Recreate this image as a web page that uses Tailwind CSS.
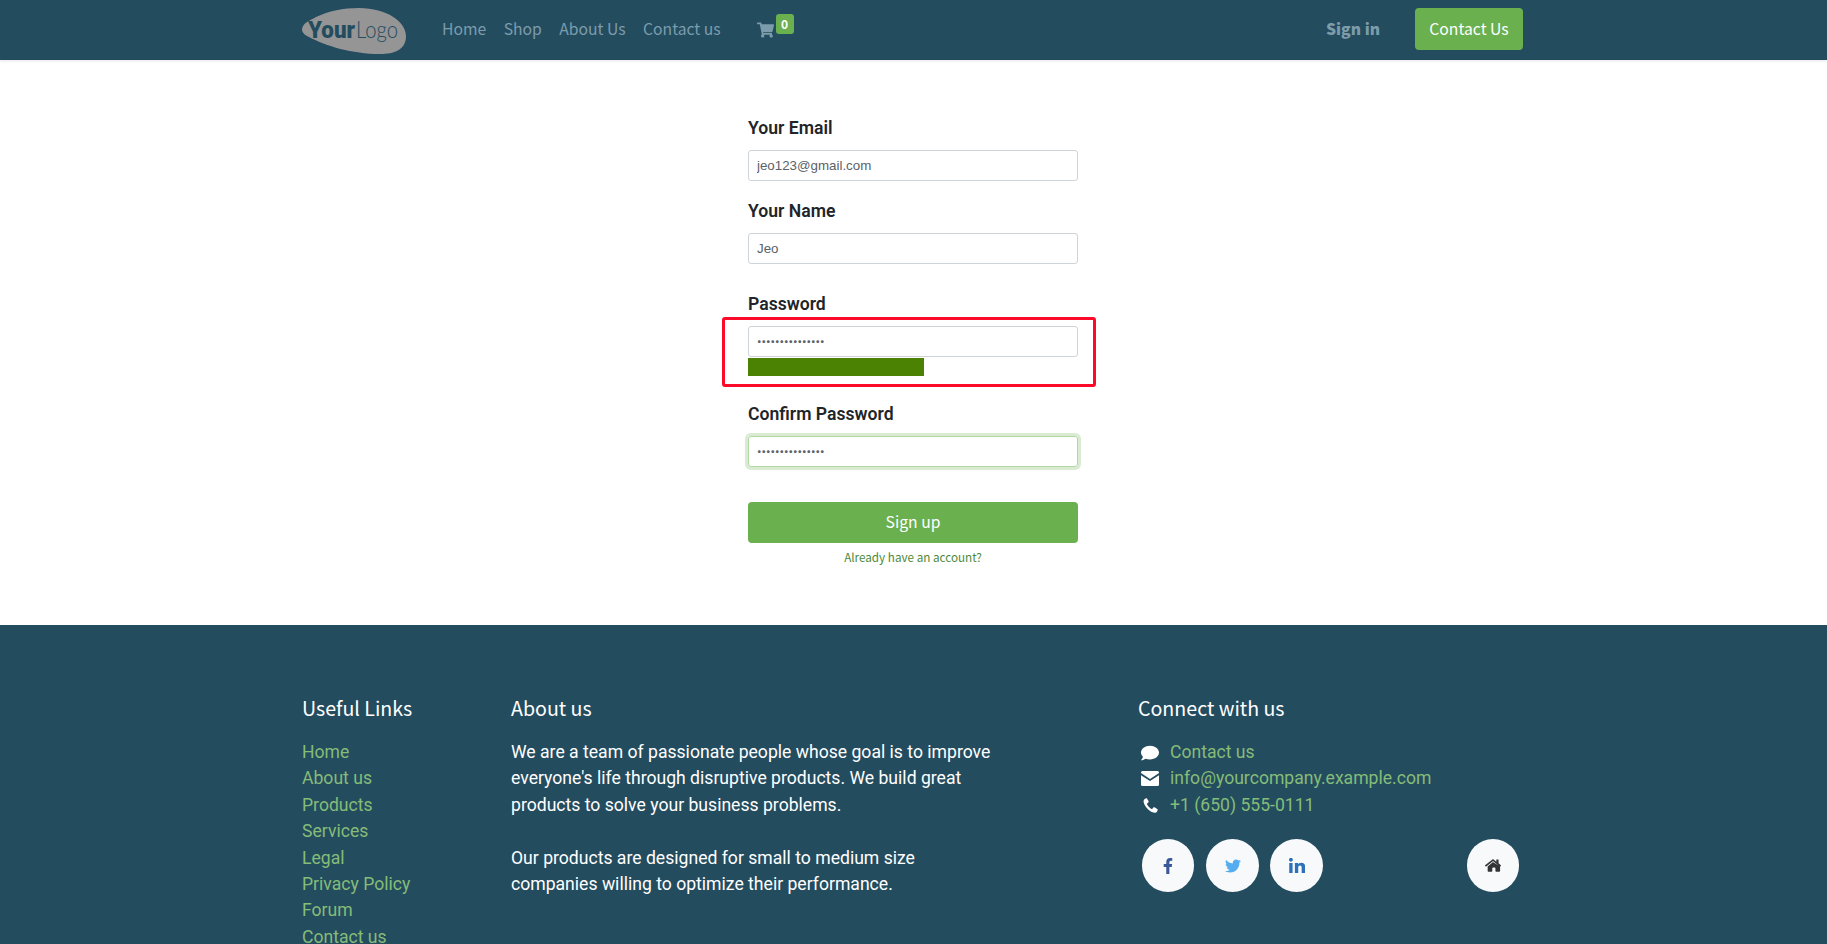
<!doctype html>
<html><head><meta charset="utf-8"><title>Sign up</title>
<script src="https://cdn.jsdelivr.net/npm/@tailwindcss/browser@4"></script>
</head>
<body class="bg-white font-['Roboto',sans-serif] text-[17.6px] text-[#212529] h-[944px] overflow-hidden">
<header class="h-[60px] bg-[#244c5f] shadow-[0_1px_3px_rgba(0,0,0,0.1)] relative">
  <div class="w-[1221px] h-full flex items-center font-['Noto_Sans_CJK_SC',sans-serif] text-[15.7px] text-[#7c9cac] ml-[302px]">
    <svg class="w-[106px] h-[46px] mr-[34px] mt-[2px]" viewBox="0 0 106 46" aria-hidden="true">
      <path d="M0 21C1 15 7 13 14 9C27 3 41 0 57 0C85 0 104 14 104 28C104 42 92 46 78 46C50 46 24 38 7 29C3 27 0 25 0 21Z" fill="#959595"/>
      <text x="6" y="30" font-family="Roboto" font-weight="900" font-size="23" textLength="47" lengthAdjust="spacingAndGlyphs" fill="#244c5f">Your</text>
      <text x="54" y="30" font-family="Lato" font-weight="300" font-size="24" textLength="42" lengthAdjust="spacingAndGlyphs" fill="#244c5f">Logo</text>
    </svg>
    <nav class="flex gap-[17.5px] mt-[-2px]"><a>Home</a><a>Shop</a><a>About Us</a><a>Contact us</a></nav>
    <div class="relative ml-[36px] w-[40px] h-[30px] flex items-center">
      <svg class="w-[17px] h-[16px] mt-[-1px]" viewBox="0 0 576 512" aria-hidden="true"><path fill="#7c9cac" d="M528 301 575 93c3-15-8-29-23-29H159l-9-47C148 7 139 0 128 0H24C11 0 0 11 0 24v16c0 13 11 24 24 24h70l70 343c-17 10-28 28-28 49 0 31 25 56 56 56s56-25 56-56c0-16-7-30-17-40h210c-11 10-17 24-17 40 0 31 25 56 56 56s56-25 56-56c0-22-13-41-32-50l5-24c4-15-8-29-23-29H213l-7-32h299c11 0 21-8 23-19z"/></svg>
      <span class="absolute left-[19px] top-[-1px] w-[18px] h-[20px] rounded-[3px] bg-[#6ab04f] text-white text-[12px] font-bold flex items-center justify-center leading-none">0</span>
    </div>
    <a class="ml-auto font-black mr-[35px] mt-[-2px]">Sign in</a>
    <a class="w-[108px] h-[42px] mt-[-2px] rounded-[4px] bg-[#6ab04f] text-white flex items-center justify-center">Contact Us</a>
  </div>
</header>

<main class="h-[565px] pt-[56px] flex justify-center">
  <form class="w-[330px] ml-[-1px] flex flex-col">
    <label class="font-semibold leading-[24px] text-[#212529] mb-[10px]">Your Email</label>
    <input value="jeo123@gmail.com" class="h-[31px] w-full border border-[#ced4da] rounded-[3px] px-[8px] text-[13.33px] text-[#5a6268] font-['Liberation_Sans',sans-serif]">
    <label class="font-semibold leading-[24px] mt-[18px] mb-[10px]">Your Name</label>
    <input value="Jeo" class="h-[31px] w-full border border-[#ced4da] rounded-[3px] px-[8px] text-[13.33px] text-[#5a6268] font-['Liberation_Sans',sans-serif]">
    <label class="font-semibold leading-[24px] mt-[28px] mb-[10px]">Password</label>
    <div class="relative">
      <input type="password" value="123456789012345" class="block h-[31px] w-full border border-[#ced4da] rounded-[3px] px-[8px] text-[13.33px] text-[#5a6268] font-['Roboto',sans-serif]">
      <div class="h-[18px] w-[176px] mt-[1px] bg-[#4c8204]"></div>
      <div class="absolute left-[-26px] top-[-9px] w-[374px] h-[70px] border-[3px] border-[#fb0a2a] rounded-[3px]"></div>
    </div>
    <label class="font-semibold leading-[24px] mt-[26px] mb-[10px]">Confirm Password</label>
    <input type="password" value="123456789012345" class="h-[31px] w-full border border-[#b0d8a0] rounded-[3px] px-[8px] text-[13.33px] text-[#5a6268] font-['Roboto',sans-serif] shadow-[0_0_0_3px_rgba(106,176,79,0.25)]">
    <button type="button" class="mt-[35px] h-[41px] pb-[2px] w-full rounded-[4px] bg-[#6ab04f] text-white text-[15.7px] font-['Noto_Sans_CJK_SC',sans-serif]">Sign up</button>
    <a class="mt-[4px] text-center text-[11.7px] leading-[20px] text-[#4c8a3a] font-['Noto_Sans_CJK_SC',sans-serif]">Already have an account?</a>
  </form>
</main>

<footer class="h-[319px] bg-[#244c5f] overflow-hidden pl-[302px] pt-[71px] flex">
  <div class="w-[209px]">
    <h5 class="font-['Noto_Sans_CJK_SC',sans-serif] text-[19.6px] leading-[24px] text-white mb-[19px]">Useful Links</h5>
    <ul class="text-[#84bc78] leading-[26.4px]"><li>Home</li><li>About us</li><li>Products</li><li>Services</li><li>Legal</li><li>Privacy Policy</li><li>Forum</li><li>Contact us</li></ul>
  </div>
  <div class="w-[627px]">
    <h5 class="font-['Noto_Sans_CJK_SC',sans-serif] text-[19.6px] leading-[24px] text-white mb-[19px]">About us</h5>
    <p class="text-white leading-[26.4px] w-[490px]">We are a team of passionate people whose goal is to improve everyone's life through disruptive products. We build great products to solve your business problems.</p>
    <p class="text-white leading-[26.4px] w-[490px] mt-[26.4px]">Our products are designed for small to medium size companies willing to optimize their performance.</p>
  </div>
  <div class="w-[380px]">
    <h5 class="font-['Noto_Sans_CJK_SC',sans-serif] text-[19.6px] leading-[24px] text-white mb-[19px]">Connect with us</h5>
    <ul class="text-[#84bc78] leading-[26.4px]">
      <li class="flex items-center"><svg class="w-[18px] h-[16px] ml-[3px] mr-[11px] mt-[1px]" viewBox="0 0 512 448" aria-hidden="true"><path fill="#fff" d="M256 16C115 16 0 103 0 210c0 46 21 88 56 121-12 41-38 79-54 95-3 3-2 7 3 6 49-4 95-26 123-48 38 14 82 22 128 22 141 0 256-87 256-196S397 16 256 16z"/></svg><span>Contact us</span></li>
      <li class="flex items-center"><svg class="w-[18px] h-[15px] ml-[3px] mr-[11px]" viewBox="0 0 18 15" aria-hidden="true"><path fill="#fff" d="M1.500 0h15A1.500 1.500 0 0 1 18 1.500v.6L9 8 0 2.100v-.6A1.500 1.500 0 0 1 1.500 0zM0 4.200l9 5.800 9-5.800v9.300a1.500 1.500 0 0 1-1.500 1.500h-15A1.500 1.500 0 0 1 0 13.500z"/></svg><span>info@yourcompany.example.com</span></li>
      <li class="flex items-center"><svg class="w-[15px] h-[15px] ml-[5px] mr-[12px]" viewBox="0 0 512 512" aria-hidden="true"><path fill="#fff" d="M100 10 60 30C20 55 10 110 30 170c40 130 170 270 300 320 70 25 130 10 155-40l15-40c5-15 0-30-15-38l-90-55c-14-8-30-5-40 7l-35 45c-10 10-20 12-32 6-60-35-115-95-150-160-6-12-4-22 6-30l40-36c12-10 15-25 8-38L135 20c-8-13-22-16-35-10z"/></svg><span>+1 (650) 555-0111</span></li>
    </ul>
    <div class="flex mt-[21px] pl-[4px] relative w-[380px]">
      <a class="w-[52px] h-[53px] rounded-full bg-[#f8f9fb] flex items-center justify-center mr-[12px]"><svg class="w-[10px] h-[18px]" viewBox="0 0 320 512" aria-hidden="true"><path fill="#3b5998" d="M279 288l14-93h-89v-60c0-25 12-50 52-50h41V6s-37-6-72-6c-73 0-121 44-121 125v70H23v93h81v224h100V288z"/></svg></a>
      <a class="w-[53px] h-[53px] rounded-full bg-[#f8f9fb] flex items-center justify-center mr-[11px]"><svg class="w-[16px] h-[14px]" viewBox="0 0 512 416" aria-hidden="true"><path fill="#55acee" d="M459 104c0 5 0 9 0 14 0 138-105 298-298 298-59 0-114-17-161-47 8 1 16 1 25 1 49 0 94-17 130-45-46-1-85-31-98-73 6 1 13 2 20 2 9 0 19-1 28-4-48-10-84-52-84-103v-1c14 8 30 13 47 13-28-19-47-51-47-87 0-19 5-37 14-53 52 64 129 105 216 110-2-8-3-16-3-24 0-58 47-105 105-105 30 0 57 13 77 33 24-5 46-14 67-26-8 24-24 45-46 58 21-2 41-8 60-16-14 21-32 39-52 55z"/></svg></a>
      <a class="w-[53px] h-[53px] rounded-full bg-[#f8f9fb] flex items-center justify-center"><svg class="w-[16px] h-[15px]" viewBox="0 0 448 416" aria-hidden="true"><path fill="#2b70b8" d="M100 416H7V139h93zM54 101C24 101 0 77 0 47a54 54 0 0 1 108 0c0 30-24 54-54 54zM448 416h-93V281c0-32-1-73-45-73-45 0-52 35-52 71v137h-93V139h89v38h1c12-24 43-45 88-45 94 0 111 62 111 142z"/></svg></a>
      <a class="absolute left-[329px] top-0 w-[52px] h-[53px] rounded-full bg-[#f8f9fb] flex items-center justify-center"><svg class="w-[16px] h-[13px]" viewBox="0 0 576 448" aria-hidden="true"><path fill="#333" d="M280 104 96 256v164c0 15 13 28 28 28l112-1c15 0 27-13 27-28v-95c0-15 13-28 28-28h56c15 0 28 13 28 28v95c0 15 12 28 28 28h112c15 0 28-13 28-28V256L296 104c-5-4-11-4-16 0zM572 212 488 143V24c0-7-5-12-12-12h-56c-7 0-12 5-12 12v62L318 13c-18-15-43-15-61 0L4 212c-5 4-6 12-2 17l26 31c4 5 12 6 17 2L280 68c5-4 11-4 16 0l235 194c5 4 13 3 17-2l26-31c4-5 3-13-2-17z"/></svg></a>
    </div>
  </div>
</footer>
</body></html>
